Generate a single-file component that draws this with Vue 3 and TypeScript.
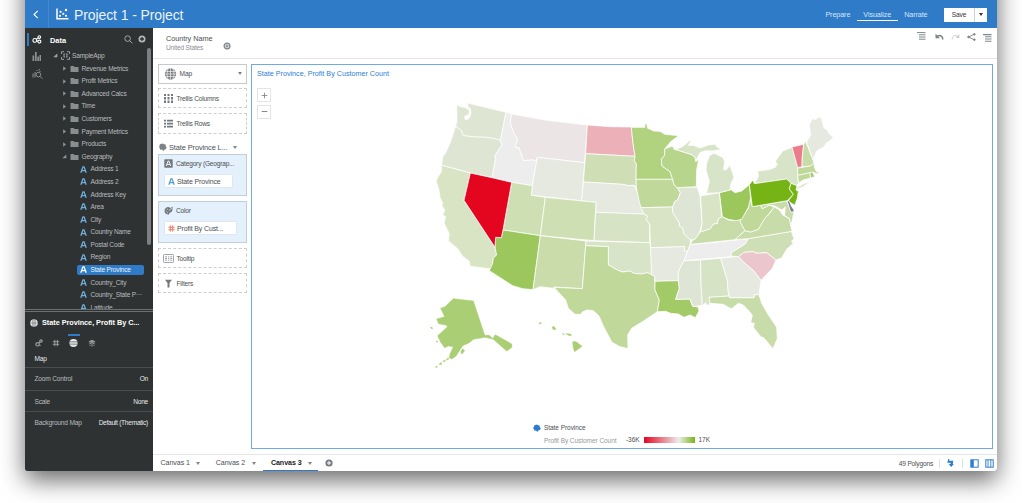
<script setup lang="ts">
interface Shape { id: string; fill: string; d: string }
interface TreeRow { label: string; kind: 'folder' | 'attr'; open?: boolean; selected?: boolean }

const folders = ['Revenue Metrics', 'Profit Metrics', 'Advanced Calcs', 'Time', 'Customers', 'Payment Metrics', 'Products']
const attrs = ['Address 1', 'Address 2', 'Address Key', 'Area', 'City', 'Country Name', 'Postal Code', 'Region', 'State Province', 'Country_City', 'Country_State P···', 'Latitude']
const rows: TreeRow[] = [
  ...folders.map((label): TreeRow => ({ label, kind: 'folder' })),
  { label: 'Geography', kind: 'folder', open: true },
  ...attrs.map((label): TreeRow => ({ label, kind: 'attr', selected: label === 'State Province' })),
]

const settings = [
  { name: 'Zoom Control', value: 'On', cls: 'zoomctl' },
  { name: 'Scale', value: 'None', cls: 'scale' },
  { name: 'Background Map', value: 'Default (Thematic)', cls: 'bgmap' },
]

const tabs = ['Canvas 1', 'Canvas 2', 'Canvas 3']

const states: Shape[] = [
  { id: 'WA', fill: '#dfe5d3', d: 'M80 44L92 50L106 53L118 60L117 74L105 78L104 84L108 91L118 84L123 70L121 56L114 50L113 39L228 67L211 152L200 147L170 142L135 141L100 137L93 120L77 109L81 92Z' },
  { id: 'OR', fill: '#dfe5d3', d: 'M77 109L93 120L100 137L135 141L170 142L200 147L211 152L216 165L194 198L197 206L186 263L121 249L35 226L38 200L46 190L60 160Z' },
  { id: 'CA', fill: '#d8e4c4', d: 'M35 226L121 249L102 331L195 472L200 495L190 504L188 520L184 537L121 529L118 514L97 498L84 477L55 452L58 432L42 398L47 380L38 374L45 360L36 348L38 340L30 322L27 300L19 275L23 262L34 245Z' },
  { id: 'ID', fill: '#ededed', d: 'M228 67L245 72L241 98L252 130L263 147L255 172L267 175L281 212L306 209L320 212L307 287L245 277L186 263L197 206L194 198L216 165L211 152Z' },
  { id: 'MT', fill: '#ece5e5', d: 'M245 72L350 91L472 105L464 218L322 202L318 212L306 209L281 212L267 173L255 172L263 147L252 130L241 98Z' },
  { id: 'WY', fill: '#e6e9e0', d: 'M322 202L464 218L455 332L304 316L307 287Z' },
  { id: 'ND', fill: '#ebb0b8', d: 'M472 105L540 110L604 111L609 160L615 199L467 191Z' },
  { id: 'SD', fill: '#cfdeb5', d: 'M467 191L615 199L613 212L619 222L618 270L619 292L612 286L596 287L578 283L460 276Z' },
  { id: 'NE', fill: '#e6e9e0', d: 'M460 276L578 283L596 287L612 286L622 305L633 345L642 372L497 367L498 337L455 332Z' },
  { id: 'UT', fill: '#cfdfb4', d: 'M245 277L307 287L304 316L346 322L331 437L219 420Z' },
  { id: 'CO', fill: '#cfdfb4', d: 'M346 322L498 337L492 452L331 437Z' },
  { id: 'KS', fill: '#d6e3c5', d: 'M497 367L642 372L653 378L648 388L659 402L659 458L492 452Z' },
  { id: 'AZ', fill: '#9bc75c', d: 'M219 420L331 437L309 599L278 596L248 587L178 542L188 520L190 504L200 495L195 472L197 442L214 443Z' },
  { id: 'NV', fill: '#e4051f', d: 'M121 249L186 263L245 277L219 420L214 443L197 442L195 472L102 331Z' },
  { id: 'NM', fill: '#c9dcaa', d: 'M331 437L468 453L457 596L372 591L370 595L330 590L309 599Z' },
  { id: 'OK', fill: '#d8e4c7', d: 'M468 453L659 458L662 472L665 555L652 548L635 552L612 550L600 543L576 546L562 540L535 525L535 470L467 467Z' },
  { id: 'TX', fill: '#c0d89a', d: 'M467 467L535 470L535 525L562 540L576 546L600 543L612 550L635 552L652 548L674 558L675 600L688 630L682 665L645 690L605 715L593 735L594 776L570 770L546 757L520 708L507 678L490 662L472 660L458 665L452 673L435 673L415 655L407 630L372 592L457 596Z' },
  { id: 'MN', fill: '#b1d27e', d: 'M604 112L645 112L645 100L651 103L653 115L672 123L690 124L705 133L746 137L722 155L704 177L704 196L694 208L696 228L720 245L728 268L618 268L619 222L613 212L615 199L609 160Z' },
  { id: 'IA', fill: '#c0d89a', d: 'M618 268L728 268L732 284L742 293L751 308L744 328L734 335L728 351L633 353L628 335L619 292Z' },
  { id: 'MO', fill: '#d8e4c5', d: 'M633 353L728 351L728 368L748 398L748 408L758 414L762 432L780 446L782 462L773 484L763 484L764 470L662 473L659 402L648 388L653 378L642 372Z' },
  { id: 'AR', fill: '#e5e9df', d: 'M662 473L764 470L763 484L773 484L762 512L752 530L745 548L745 572L675 574L674 558L665 555Z' },
  { id: 'LA', fill: '#a2ca67', d: 'M675 574L745 572L748 595L737 628L780 627L787 648L804 651L807 663L796 683L780 675L762 682L745 672L722 670L707 664L682 665L688 630L675 600Z' },
  { id: 'MS', fill: '#dfe5d4', d: 'M762 512L812 510L813 580L817 646L789 650L780 627L737 628L748 595L745 572L745 548L752 530Z' },
  { id: 'AL', fill: '#d6e3c5', d: 'M812 510L872 505L892 570L894 600L897 618L837 622L841 634L838 644L829 646L828 638L817 646L813 580Z' },
  { id: 'FL', fill: '#c8dcaa', d: 'M837 622L897 618L899 623L972 623L973 614L987 614L995 640L1015 675L1040 712L1042 745L1029 776L1000 742L994 742L970 712L973 700L962 698L967 676L958 664L940 645L925 640L905 656L895 652L880 643L840 640Z' },
  { id: 'GA', fill: '#e6e9e0', d: 'M872 505L926 499L940 515L972 543L993 572L987 614L973 614L972 623L899 623L894 600L892 570Z' },
  { id: 'NC', fill: '#cfdfb5', d: 'M955 446L1084 424L1092 446L1084 454L1090 460L1070 478L1055 504L1038 510L1010 488L978 490L972 485L942 487L926 500L902 498L905 487L945 462Z' },
  { id: 'SC', fill: '#ecc6cd', d: 'M926 500L942 487L972 485L978 490L1010 488L1038 510L1027 535L993 571L972 543L940 515Z' },
  { id: 'TN', fill: '#ededed', d: 'M780 463L850 458L955 446L945 462L905 487L902 500L762 512L773 484Z' },
  { id: 'KY', fill: '#c8dcaa', d: 'M782 463L786 452L795 447L812 425L840 417L850 402L862 400L864 388L877 380L895 390L918 392L930 387L932 398L945 422L915 449Z' },
  { id: 'VA', fill: '#c8dcaa', d: 'M915 449L945 422L962 426L985 418L1003 385L1018 372L1032 350L1048 360L1058 375L1078 386L1082 405L1086 424L955 446Z' },
  { id: 'WV', fill: '#c0d89a', d: 'M960 325L967 350L992 346L997 356L1018 345L1032 352L1018 370L1003 387L985 418L962 426L945 422L930 395L935 385L955 355Z' },
  { id: 'MD', fill: '#c8dcaa', d: 'M992 346L1070 333L1083 366L1092 366L1088 384L1083 408L1078 385L1064 377L1066 350L1056 360L1035 348L1018 345L997 356Z' },
  { id: 'OH', fill: '#9bc75c', d: 'M868 308L903 299L915 308L935 303L958 284L962 325L955 352L935 388L918 392L895 388L877 380Z' },
  { id: 'IN', fill: '#d8e4c5', d: 'M812 318L868 308L875 380L864 388L862 400L850 402L840 417L812 425L816 400Z' },
  { id: 'IL', fill: '#dfe5d4', d: 'M742 293L802 291L810 318L816 400L808 430L795 448L782 450L762 432L758 414L748 408L748 398L728 368L728 351L734 335L744 328L751 308Z' },
  { id: 'WI', fill: '#b8d58c', d: 'M704 177L728 168L732 178L745 181L788 195L796 204L797 215L806 208L800 240L799 290L742 293L732 284L728 268L720 245L696 228L694 208L704 196Z' },
  { id: 'MI', fill: '#d8e4c7', d: 'M738 179L760 168L780 151L783 153L775 166L790 166L810 174L835 165L855 163L862 172L876 178L860 181L840 183L826 182L810 188L800 208L796 204L788 195L745 181ZM830 308L838 275L828 240L830 220L838 198L851 189L862 194L880 204L884 218L880 238L888 240L900 226L912 262L903 280L900 300L868 308L832 310Z' },
  { id: 'NY', fill: '#d8e4c7', d: 'M973 281L986 258L982 244L1020 238L1036 232L1042 222L1036 214L1058 183L1087 172L1098 215L1103 233L1105 282L1099 287L1083 280L1070 267ZM1100 294L1118 283L1142 272L1120 290L1102 298Z' },
  { id: 'PA', fill: '#76b416', d: 'M958 284L969 270L973 281L1070 267L1083 280L1078 297L1090 313L1072 332L967 350Z' },
  { id: 'NJ', fill: '#76b416', d: 'M1083 280L1101 287L1098 300L1105 304L1102 325L1094 346L1074 333L1090 313L1078 297Z' },
  { id: 'DE', fill: '#7b808c', d: 'M1071 332L1078 333L1084 348L1092 360L1091 366L1082 366Z' },
  { id: 'VT', fill: '#ea7c8b', d: 'M1086 171L1121 163L1117 200L1116 230L1103 233Z' },
  { id: 'NH', fill: '#c8dcaa', d: 'M1121 163L1127 154L1145 200L1152 218L1142 228L1116 230L1117 200Z' },
  { id: 'MA', fill: '#c0d89a', d: 'M1103 234L1142 228L1152 218L1153 232L1160 246L1169 244L1162 252L1150 247L1103 256Z' },
  { id: 'CT', fill: '#c0d89a', d: 'M1103 256L1140 248L1142 264L1120 270L1106 279Z' },
  { id: 'RI', fill: '#a2ca67', d: 'M1140 248L1147 246L1154 260L1142 264Z' },
  { id: 'ME', fill: '#e6e9e0', d: 'M1130 155L1142 136L1138 105L1147 86L1158 89L1165 81L1174 84L1182 114L1192 120L1198 132L1210 142L1198 154L1190 158L1180 172L1168 178L1160 184L1150 206L1145 200Z' },
]

// Alaska and Hawaii are insets without neighbouring borders.
const insets: Shape[] = [
  { id: 'AK', fill: '#a9ce73', d: 'M70 626L130 633L164 736L178 736L188 746L196 734L245 762L246 772L230 783L190 748L165 742L130 748L118 758L98 767L78 798L66 807L58 804L60 792L70 770L55 768L44 773L32 757L23 737L52 711L50 706L26 701L20 687L44 680L32 655L45 650ZM92 786L98 776L104 782L96 792ZM49 810L54 803L56 808ZM27 823L34 817L34 824ZM16 831L22 828L20 833ZM0 711L8 714L6 717ZM18 753L24 755L20 756ZM38 814L46 810L44 815Z' },
  { id: 'HI', fill: '#a9ce73', d: 'M326 700L334 697L332 702ZM366 712L372 709L378 718L370 719ZM397 731L404 732L401 734ZM408 731L422 732L424 737L415 736ZM428 755L438 755L456 769L434 785L430 774Z' },
]
</script>

<template>
  <div class="desk">
  <div class="window">
    <header class="top">
      <div class="back"><svg width="6" height="9" viewBox="0 0 6 9"><path d="M4.8 .8L1 4.5l3.8 3.7" fill="none" stroke="#fff" stroke-width="1.1" /></svg></div>
      <svg class="logo" width="13" height="12" viewBox="0 0 13 12">
        <path d="M1 .5V10.8H12.5" fill="none" stroke="#fff" stroke-width="1.5" />
        <g fill="#fff"><circle cx="4" cy="7.8" r="1.1" /><circle cx="4.6" cy="3.8" r="1.1" /><circle cx="7.3" cy="5.8" r="1.1" /><circle cx="10" cy="7.8" r="1.1" /><circle cx="10" cy="2" r="1.2" /></g>
      </svg>
      <h1>Project 1 - Project</h1>
      <nav>
        <span>Prepare</span><span class="on">Visualize</span><span>Narrate</span>
      </nav>
      <div class="save"><span>Save</span><i><b class="tri"></b></i></div>
    </header>

    <div class="body">
      <aside>
        <div class="explorer">
          <div class="rail">
            <div class="railitem on">
              <svg width="10" height="9" viewBox="0 0 10 9" fill="none" stroke="#fff" stroke-width="1.1"><circle cx="2.8" cy="5.4" r="1.9" /><circle cx="7.3" cy="2.1" r="1.3" /><circle cx="7.4" cy="6.6" r="1.5" /><path d="M4.4 4.2l1.9-1.3M4.7 5.8l1.4.4" /></svg>
            </div>
            <div class="railitem">
              <svg width="9" height="9" viewBox="0 0 9 9" fill="#8b9093"><path d="M.5 3.5h1.7V9H.5zM3 0h1.7v9H3zM5.4 4.5H7V9H5.4zM7.5 3H9v6H7.5z" /></svg>
            </div>
            <div class="railitem">
              <svg width="11" height="10" viewBox="0 0 11 10" fill="none" stroke="#8b9093"><path d="M1 4.5v4M3 3v5.500" /><circle cx="6.400" cy="5.600" r="2.300" /><path d="M8 7.400L10.300 9.700M4.500 1.500h1M6.500 .8h1.500M7.500 2.500h1" /></svg>
            </div>
          </div>
          <div class="data">
            <div class="datahead">
              <b>Data</b>
              <svg width="9" height="9" viewBox="0 0 9 9" fill="none" stroke="#a0a4a6"><circle cx="3.600" cy="3.600" r="2.800" /><path d="M5.600 5.600L8.400 8.400" /></svg>
              <svg width="8" height="8" viewBox="0 0 8 8"><circle cx="4" cy="4" r="3.500" fill="#b2b6b8" /><path d="M4 2v4M2 4h4" stroke="#2e3233" stroke-width="1.300" /></svg>
            </div>
            <div class="tree">
              <div class="row root">
                <svg class="caret" width="5" height="5" viewBox="0 0 5 5"><path d="M4.300 .5V4.300H.3z" fill="#a3a7a9" /></svg>
                <svg width="9" height="9" viewBox="0 0 9 9" fill="none" stroke="#a3a7a9"><path d="M.5 3V.7H3M6 .7h2.500V3M8.500 6v2.400H6M3 8.400H.5V6M2.500 3h1.500M5 3h1.500M2.500 6h1.500M5 6h1.500M3 3v3M6 3v3" stroke-width=".9" /></svg>
                <span>SampleApp</span>
              </div>
              <div v-for="r in rows" :key="r.label" class="row" :class="[r.kind, { selected: r.selected }]">
                <template v-if="r.kind === 'folder'">
                  <svg class="caret" width="5" height="5" viewBox="0 0 5 5"><path :d="r.open ? 'M4.300 .5V4.300H.3z' : 'M1.200 .3L4 2.500L1.200 4.700z'" fill="#8f9496" /></svg>
                  <svg width="9" height="8" viewBox="0 0 9 8"><path d="M.5 1h3.200l.8 1h4v5H.5z" fill="#888d90" /></svg>
                </template>
                <svg v-else width="7" height="7" viewBox="0 0 7 7" fill="none" :stroke="r.selected ? '#fff' : '#6fb0de'" stroke-width="1.300"><path d="M.8 6.700L3 .8h1L6.200 6.700M1.900 4.700h3.200" /></svg>
                <span>{{ r.label }}</span>
              </div>
            </div>
            <div class="scrollbar"></div>
          </div>
        </div>

        <div class="props">
          <div class="ptitle">
            <svg width="8" height="8" viewBox="0 0 8 8"><circle cx="4" cy="4" r="3.800" fill="#e4e6e7" /><path d="M2.700 .5v7M4 .2v7.600M5.300 .5v7M.3 4h7.400" stroke="#2e3233" stroke-width=".35" /></svg>
            <b>State Province, Profit By C...</b>
          </div>
          <div class="ptabs">
            <span><svg width="8" height="8" viewBox="0 0 8 8" fill="none" stroke="#969b9e" stroke-width="1.200"><circle cx="2.600" cy="5.300" r="1.700" /><circle cx="6" cy="2" r="1.200" /><path d="M4 4l1-1M4.500 6l1 .8" /></svg></span>
            <span><svg width="8" height="8" viewBox="0 0 8 8" stroke="#969b9e"><path d="M2.800 .8v6.400M5.400 .8v6.400M.8 2.700h6.400M.8 5.300h6.400" /></svg></span>
            <span class="on"><svg width="9" height="8" viewBox="0 0 9 8"><ellipse cx="4.500" cy="4" rx="4.100" ry="3.900" fill="#e8eaeb" /><path d="M.5 2.500h8M.4 4h8.200M.5 5.600h8" stroke="#2e3233" stroke-width=".4" /></svg></span>
            <span><svg width="8" height="8" viewBox="0 0 8 8" fill="#969b9e"><path d="M4 .8l3.500 1.700L4 4.200.5 2.500zM.5 4l1-.4L4 4.800l2.500-1.200 1 .4L4 5.700zM1 5.400L4 6.700l3-1.300v.7L4 7.500 1 6.100z" /></svg></span>
          </div>
          <div class="psec">Map</div>
          <div v-for="s in settings" :key="s.name" class="pset" :class="s.cls"><span>{{ s.name }}</span><em>{{ s.value }}</em></div>
        </div>
      </aside>

      <main>
        <div class="filterbar">
          <div class="filter"><span>Country Name</span><small>United States</small></div>
          <svg class="add" width="8" height="8" viewBox="0 0 8 8"><circle cx="4" cy="4" r="2.900" fill="#fff" stroke="#7d8286" stroke-width="1.300" /><path d="M4 2.200v3.600M2.200 4h3.600" stroke="#7d8286" stroke-width="1.200" /></svg>
          <div class="tools">
            <svg class="t1" width="9" height="8" viewBox="0 0 9 8" stroke="#82878b" stroke-width="1"><path d="M0 .6h8.500M2 2.800h6.500M2 5h6.500M2 7.200h6.500" /></svg>
            <svg class="t2" width="9" height="8" viewBox="0 0 9 8" fill="none" stroke="#7d8286" stroke-width="1.500"><path d="M2.300 3.200C5 1.700 8 3 7.800 6.500" /><path d="M.5 .8v4.500h4.500z" fill="#7d8286" stroke="none" /></svg>
            <svg class="t3" width="9" height="8" viewBox="0 0 9 8" fill="none" stroke="#c9cccd" stroke-width="1"><path d="M6.700 3.200C4 1.700 1 3 1.200 6.500" /><path d="M8.300 1v4h-3.500z" fill="#c9cccd" stroke="none" /></svg>
            <svg class="t4" width="9" height="8" viewBox="0 0 9 8" stroke="#7d8286" fill="#7d8286"><path d="M7.300 1.200L1.500 4l5.800 2.800" fill="none" stroke-width=".9" /><circle cx="7.400" cy="1.300" r=".8" /><circle cx="1.500" cy="4" r=".8" /><circle cx="7.400" cy="6.700" r=".8" /></svg>
            <svg class="t5" width="9" height="8" viewBox="0 0 9 8" stroke="#82878b" stroke-width="1.100"><path d="M0 .6h8.500M2 2.800h6.500M2 5h6.500M2 7.200h6.500" /></svg>
          </div>
        </div>

        <div class="work">
          <section class="grammar">
            <div class="picker">
              <svg width="13" height="12" viewBox="0 0 13 12"><circle cx="6.500" cy="6" r="5.700" fill="#7d8286" /><path d="M.9 3.500h11.200M.7 6h11.600M.9 8.500h11.200M6.500 .3v11.400M4.200 .6C2.600 4 2.600 8 4.200 11.400M8.800 .6c1.600 3.400 1.600 7.400 0 10.800" fill="none" stroke="#fff" stroke-width=".6" /></svg>
              <span>Map</span><b class="tri gray"></b>
            </div>
            <div class="drop">
              <svg width="9" height="9" viewBox="0 0 9 9" fill="#74797d"><path d="M0 0h2v2H0zM3.500 0h2v2h-2zM7 0h2v2H7zM0 3h2v2.500H0zM3.500 3h2v2.500h-2zM7 3h2v2.500H7zM0 6.500h2V9H0zM3.500 6.500h2V9h-2zM7 6.500h2V9H7z" /></svg>
              <span>Trellis Columns</span>
            </div>
            <div class="drop">
              <svg width="9" height="9" viewBox="0 0 9 9" fill="#74797d"><path d="M0 .8h2v1.800H0zM3 .8h6v1.800H3zM0 3.800h2v1.800H0zM3 3.800h6v1.800H3zM0 6.800h2v1.800H0zM3 6.800h6v1.800H3z" /></svg>
              <span>Trellis Rows</span>
            </div>
            <div class="layer">
              <svg width="8" height="8" viewBox="0 0 8 8"><path d="M1.500 1L4 .4l1 .8 1.600.2.2 1.800.8 1.300-.8 1.800-1.600.4L4.500 8 3 6.600l-1.700.2L.3 4.600.5 2z" fill="#7d8286" /></svg>
              <span>State Province L...</span><b class="tri gray"></b>
            </div>
            <div class="filled">
              <div class="flabel">
                <svg width="9" height="9" viewBox="0 0 9 9"><rect x=".3" y=".3" width="8.400" height="8.400" rx=".6" fill="#74797d" /><path d="M2.300 7L4.100 2h.8l1.800 5M3 5.400h3" fill="none" stroke="#fff" stroke-width=".9" /></svg>
                <span>Category (Geograp...</span>
              </div>
              <div class="chip"><svg width="7" height="7" viewBox="0 0 7 7" fill="none" stroke="#4b9bd1" stroke-width="1.200"><path d="M.8 6.700L3 .8h1L6.200 6.700M1.900 4.700h3.200" /></svg><span>State Province</span></div>
            </div>
            <div class="filled color">
              <div class="flabel">
                <svg width="9" height="9" viewBox="0 0 9 9"><path d="M4.500 1C2 1 .5 2.800.5 5s1.700 3.500 3.800 3.500c1.500 0 .7-1.500 1.800-2 1.200-.5 2.200-.4 2.200-2.200l.4-3.800-2 1.500z" fill="#74797d" /><path d="M3 3.200h.9M1.800 5h.9M3 6.700h.9M5 4.800L7.700 2" stroke="#e6f1fb" stroke-width=".8" /></svg>
                <span>Color</span>
              </div>
              <div class="chip wide"><svg width="7" height="7" viewBox="0 0 7 7" stroke="#ee7b69" stroke-width="1"><path d="M2.300 .4v6.200M4.700 .4v6.200M.4 2.300h6.200M.4 4.700h6.200" /></svg><span>Profit By Cust...</span></div>
            </div>
            <div class="drop tip">
              <svg width="11" height="9" viewBox="0 0 11 9" fill="none" stroke="#8a8f92" stroke-width=".8"><rect x=".5" y=".5" width="10" height="8" rx=".8" /><path d="M2 2.800h2M2 4.500h2M2 6.200h2M5 2.800h1.300M5 4.500h1.300M5 6.200h1.300M7.200 2.800h2M7.200 4.500h2M7.200 6.200h2" /></svg>
              <span>Tooltip</span>
            </div>
            <div class="drop">
              <svg width="9" height="9" viewBox="0 0 9 9"><path d="M1 .8h7L5.500 4v4.500h-2V4z" fill="#74797d" /></svg>
              <span>Filters</span>
            </div>
          </section>

          <section class="canvas">
            <h2>State Province, Profit By Customer Count</h2>
            <div class="zoom"><span><svg width="7" height="7" viewBox="0 0 7 7" stroke="#85898c" stroke-width=".9"><path d="M3.500 .7v5.600M.7 3.500h5.600" /></svg></span><span><svg width="7" height="7" viewBox="0 0 7 7" stroke="#85898c"><path d="M.7 3.500h5.600" /></svg></span></div>
            <svg class="map" width="420" height="300" viewBox="0 0 1260 900">
              <g stroke="#fff" stroke-opacity=".8" stroke-width="2.800" stroke-linejoin="round">
                <path v-for="s in states" :key="s.id" :d="s.d" :fill="s.fill" />
              </g>
              <path v-for="s in insets" :key="s.id" :d="s.d" :fill="s.fill" :stroke="s.fill" stroke-width="1.500" />
            </svg>
            <div class="legend">
              <svg width="8" height="8" viewBox="0 0 8 8"><path d="M1.500 1.200L4 .4l1 .8 1.600.2.2 1.800 1 1.300-1 1.600-1.600.4L4.500 8 3 6.600l-1.500.2L.9 5 0 4.200.8 3z" fill="#2b7bd0" /></svg>
              <div class="ltext"><span>State Province</span><div class="lscale"><em>Profit By Customer Count</em><span>-36K</span><i></i><span>17K</span></div></div>
            </div>
          </section>
        </div>

        <footer>
          <div v-for="(t, n) in tabs" :key="t" class="tab" :class="{ on: n === 2 }"><span>{{ t }}</span><b class="tri gray"></b></div>
          <svg width="8" height="8" viewBox="0 0 8 8"><circle cx="4" cy="4" r="3.600" fill="#777b7f" /><path d="M4 2v4M2 4h4" stroke="#fff" /></svg>
          <div class="status">
            <span>49 Polygons</span><i></i>
            <svg width="7" height="8" viewBox="0 0 7 8"><path d="M2.600 0L1.900 1.800h4.300l-.4 3.300h1L4.200 8 1.800 5.100h1.700l.2-1.400H.3L1.300 0z" fill="#2b7bd0" /></svg><i></i>
            <svg class="p1" width="9" height="9" viewBox="0 0 9 9"><rect x=".8" y=".8" width="7.400" height="7.400" fill="#fff" stroke="#2f7ed0" /><path d="M1 1h2.800v7H1z" fill="#2f7ed0" /></svg>
            <svg class="p2" width="9" height="9" viewBox="0 0 9 9"><rect x=".8" y=".8" width="7.400" height="7.400" fill="#fff" stroke="#2f7ed0" /><path d="M3 1v7M5.800 1v7" stroke="#2f7ed0" stroke-width=".9" /></svg>
          </div>
        </footer>
      </main>
    </div>
  </div>
  </div>
</template>

<style>
html { background: #fff; }
body { margin: 0; }
</style>

<style scoped>
* { box-sizing: border-box; }
svg { display: block; flex: none; }
span, em, small, b { white-space: nowrap; }
em { font-style: normal; }
.desk { height: 503px; overflow: hidden; background: #fff; }
.window {
  width: 972.500px; height: 531px; margin: -60px 0 0 24.500px; padding-top: 60px;
  display: flex; flex-direction: column; background: #2f7bc7; border-radius: 0 0 3px 3px;
  box-shadow: 0 9px 25px rgba(0, 0, 0, .6);
  font-family: "Liberation Sans", Arial, sans-serif; font-size: 6.600px; letter-spacing: -.19px; color: #4b4f52;
}
.tri { width: 0; height: 0; border: 2px solid transparent; border-top: 3px solid #333; border-bottom: 0; display: block; }
.tri.gray { border-top-color: #7f8487; border-width: 3px 2.300px 0; }

.top { height: 28px; flex: none; display: flex; align-items: center; color: #fff; }
.back { width: 24px; height: 28px; display: flex; align-items: center; justify-content: center; border-right: 1px solid #4489cd; }
.logo { margin: 0 0 1px 7px; }
h1 { margin: 2px 0 0 5.500px; font-size: 14px; letter-spacing: -.1px; font-weight: 400; color: #e9f2fb; }
nav { margin-left: auto; display: flex; gap: 0; font-size: 7.200px; letter-spacing: -.09px; color: #d5e6f7; }
nav span { padding: 2.500px 6.500px 0; height: 14px; }
nav .on { border-bottom: 1.500px solid #fff; }
.save { margin: 1px 10px 0 10px; height: 14px; width: 43px; background: #fff; display: flex; align-items: center; color: #333; }
.save span { width: 30px; text-align: center; }
.save i { border-left: 1px solid #cbd3da; flex: 1; height: 14px; display: flex; align-items: center; justify-content: center; }

.body { flex: 1; display: flex; min-height: 0; }
aside { width: 128.500px; background: #2e3233; color: #b9bcbe; display: flex; flex-direction: column; border-radius: 0 0 0 3px; }
.explorer { height: 281.500px; display: flex; border-bottom: 1px solid #6c7072; overflow: hidden; flex: none; }
.rail { width: 23px; padding-top: 5px; }
.railitem { height: 17.500px; display: flex; align-items: center; padding-left: 6px; margin-left: 2px; border-left: 2px solid transparent; }
.railitem.on { height: 13px; border-left-color: #2f7bc7; padding-left: 3.500px; margin-bottom: 2px; }
.railitem:not(.on) { padding-left: 3.500px; }
.data { flex: 1; display: flex; flex-direction: column; position: relative; }
.datahead { height: 21.700px; flex: none; display: flex; align-items: center; padding: 1px 7px 0 2.500px; color: #fff; font-size: 7.400px; letter-spacing: 0; }
.datahead b { flex: 1; margin-top: 3px; }
.datahead svg:last-child { margin-left: 5.500px; }
.tree { display: flex; flex-direction: column; }
.row { height: 12.580px; flex: none; display: flex; align-items: center; }
.row span { position: relative; top: -.3px; }
.row.root { padding-left: 5px; }
.row.root span { margin-left: 2px; }
.row.root .caret { margin-right: 3.500px; }
.row.folder { padding-left: 14.500px; }
.row.folder .caret { margin-right: 3px; }
.row.folder span { margin-left: 2.500px; }
.row.attr { padding-left: 3px; margin-left: 29.500px; width: 67px; }
.row.attr span { margin-left: 3.500px; }
.row.selected { height: 10.580px; margin-top: 1px; margin-bottom: 1px; background: #2f7bc7; border-radius: 2px; color: #e8f1fa; }
.scrollbar { position: absolute; right: 2px; top: 20px; width: 4px; height: 197px; border-radius: 2px; background: #7c8083; }

.props { flex: 1; margin-top: 1.500px; border-top: 1px solid #6c7072; display: flex; flex-direction: column; }
.ptitle { height: 21.500px; display: flex; align-items: center; padding-left: 5px; color: #fff; font-size: 7.300px; letter-spacing: -.04px; flex: none; }
.ptitle b { margin-left: 4.500px; }
.ptabs { display: flex; height: 17px; flex: none; padding-left: 8px; }
.ptabs span { width: 12px; height: 17px; border-top: 2px solid transparent; margin-right: 5.700px; display: flex; align-items: center; justify-content: center; }
.ptabs .on { border-top-color: #2f7bc7; }
.psec { height: 16.500px; padding: 4.500px 10px 0; color: #e6e8e9; flex: none; }
.pset { display: flex; align-items: center; justify-content: space-between; padding: 0 5px 1px 10px; border-top: 1px solid #4a4e50; flex: none; }
.pset em { color: #e6e8e9; letter-spacing: -.27px; }
.zoomctl { height: 23px; }
.scale { height: 21px; padding-top: 1px; }
.bgmap { height: 22px; }

main { flex: 1; background: #fff; display: flex; flex-direction: column; min-width: 0; border-radius: 0 0 3px 0; }
.filterbar { height: 31px; flex: none; border-bottom: 1px solid #e3e6e8; display: flex; }
.filter { display: flex; flex-direction: column; padding: 6px 0 0 13px; line-height: 9px; font-size: 7.300px; letter-spacing: -.05px; }
.filter small { font-size: 6.500px; letter-spacing: -.14px; color: #8a8e91; line-height: 10px; }
.add { margin: 13.500px 0 0 10.500px; }
.tools { margin-left: auto; display: flex; padding: 4px 5.500px 0 0; }
.t2 { margin: 1px 0 0 9.500px; }
.t3, .t4, .t5 { margin: 1px 0 0 6.700px; }
.t5 { margin-top: 2px; }

.work { flex: 1; display: flex; padding: 5px 4.500px 5px 4.500px; min-height: 0; }
.grammar { width: 89px; margin-right: 4.500px; display: flex; flex-direction: column; }
.picker { height: 19.500px; border: 1px solid #c6cacd; display: flex; align-items: center; padding: 0 4px 0 5px; margin-bottom: 4.600px; flex: none; letter-spacing: -.1px; }
.picker span { flex: 1; margin-left: 3px; }
.drop { height: 20.300px; border: 1px dashed #cccfd1; display: flex; align-items: center; padding-left: 5.500px; margin-bottom: 4.900px; flex: none; }
.drop span, .flabel span { margin-left: 3.500px; }
.drop.tip { padding-left: 4.500px; }
.drop.tip span { margin-left: 2.500px; }
.layer { height: 15.500px; display: flex; align-items: center; font-size: 7.400px; letter-spacing: -.1px; padding: 2px 0 0 1px; flex: none; }
.layer span { margin: 0 5.500px 0 2.500px; }
.filled { height: 42px; flex: none; background: #e4f0fb; border: 1px solid #c3cfd8; padding: 4.500px 0 0 5px; margin-bottom: 5px; }
.flabel { height: 9px; display: flex; align-items: center; }
.chip { width: 69px; height: 14px; margin-top: 6px; background: #fff; border: 1px solid #dce7f0; border-radius: 1.500px; display: flex; align-items: center; padding-left: 3.500px; font-size: 7px; letter-spacing: -.14px; }
.chip span { margin-left: 2px; }
.chip.wide { width: 73px; }

.canvas { flex: 1; border: 1px solid #6faae4; position: relative; }
h2 { margin: 5px 0 0 5px; font-size: 7.180px; letter-spacing: 0; line-height: 8px; font-weight: 400; color: #2d80d6; }
.zoom { padding: 10px 0 0 5px; display: flex; flex-direction: column; gap: 2.500px; }
.zoom span { width: 14px; height: 14px; border: 1px solid #e2e4e5; display: flex; align-items: center; justify-content: center; }
.map { position: absolute; left: 178px; top: 25px; }
.legend { position: absolute; left: 281px; top: 359px; display: flex; align-items: flex-start; font-size: 6.500px; letter-spacing: -.05px; }
.ltext { margin-left: 3px; line-height: 8px; }
.lscale { display: flex; align-items: center; margin-top: 2.500px; }
.lscale em { color: #969a9d; margin: 2.500px 9.500px 0 0; }
.lscale i { width: 51px; height: 5.500px; margin: 0 4px; background: linear-gradient(90deg, #e4051f, #ededed 68%, #76b416); }

footer { height: 17px; flex: none; border-top: 1px solid #e4e6e7; display: flex; align-items: center; padding-left: 7.500px; font-size: 7.100px; letter-spacing: -.07px; }
.tab { display: flex; align-items: center; margin-right: 15.300px; }
.tab .tri { margin-left: 6.500px; }
.tab.on { color: #1f2224; font-weight: 700; margin-right: 12.500px; position: relative; }
.tab.on::after { content: ""; position: absolute; left: -8px; right: -6px; bottom: -4px; border-bottom: 1.500px solid #2f7bc7; }
.status { margin-left: auto; display: flex; align-items: center; padding-right: 3px; font-size: 6.600px; letter-spacing: -.19px; }
.status i { width: 1px; height: 9px; background: #dfe2e4; margin: 0 7px 0 6px; }
.status i + svg { margin-right: 1.500px; }
.status .p1 { margin-right: 6.500px; }
</style>
